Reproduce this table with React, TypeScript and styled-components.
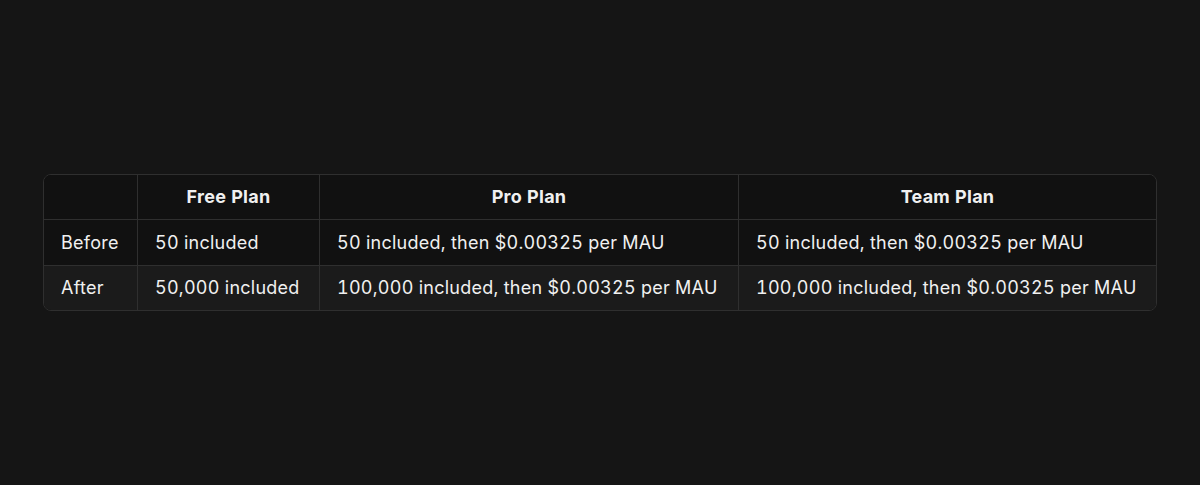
import React from "react";
import styled, { createGlobalStyle } from "styled-components";

const Global = createGlobalStyle`
  html, body {
    margin: 0;
    padding: 0;
    background: #151515;
  }
  body {
    font-family: Inter, "Noto Sans", "Liberation Sans", sans-serif;
    -webkit-font-smoothing: antialiased;
  }
`;

const Page = styled.div`
  height: 485px;
  display: flex;
  align-items: center;
  padding: 0 43px;
  box-sizing: border-box;
`;

const Frame = styled.div`
  width: 100%;
  border: 1px solid #2f2f2f;
  border-radius: 8px;
  overflow: hidden;
  background: #111111;
  color: #f0f0f0;
  font-size: 18px;
  line-height: 26px;
  letter-spacing: 0.25px;
  font-variant-numeric: tabular-nums;
`;

const Row = styled.div<{ $h: number; $alt?: boolean; $divider?: boolean }>`
  display: grid;
  grid-template-columns: 93px 182px 419px 1fr;
  height: ${(p) => p.$h}px;
  box-sizing: border-box;
  background: ${(p) => (p.$alt ? "#1b1b1b" : "#111111")};
  border-bottom: ${(p) => (p.$divider ? "1px solid #2f2f2f" : "none")};
`;

const Cell = styled.div<{ $head?: boolean }>`
  display: flex;
  align-items: center;
  justify-content: ${(p) => (p.$head ? "center" : "flex-start")};
  padding: 0 17px;
  font-weight: ${(p) => (p.$head ? 700 : 400)};
  white-space: nowrap;
  box-sizing: border-box;
  border-left: 1px solid #2f2f2f;
  &:first-child {
    border-left: none;
  }
`;

const rows = [
  {
    label: "Before",
    free: "50 included",
    pro: "50 included, then $0.00325 per MAU",
    team: "50 included, then $0.00325 per MAU",
  },
  {
    label: "After",
    free: "50,000 included",
    pro: "100,000 included, then $0.00325 per MAU",
    team: "100,000 included, then $0.00325 per MAU",
  },
];

export default function App() {
  return (
    <>
      <Global />
      <Page>
        <Frame role="table">
          <Row $h={45} $divider role="row">
            <Cell $head role="columnheader" />
            <Cell $head role="columnheader">Free Plan</Cell>
            <Cell $head role="columnheader">Pro Plan</Cell>
            <Cell $head role="columnheader">Team Plan</Cell>
          </Row>
          {rows.map((r, i) => (
            <Row
              key={r.label}
              role="row"
              $h={i === rows.length - 1 ? 44 : 46}
              $alt={i % 2 === 1}
              $divider={i < rows.length - 1}
            >
              <Cell role="cell">{r.label}</Cell>
              <Cell role="cell">{r.free}</Cell>
              <Cell role="cell">{r.pro}</Cell>
              <Cell role="cell">{r.team}</Cell>
            </Row>
          ))}
        </Frame>
      </Page>
    </>
  );
}
